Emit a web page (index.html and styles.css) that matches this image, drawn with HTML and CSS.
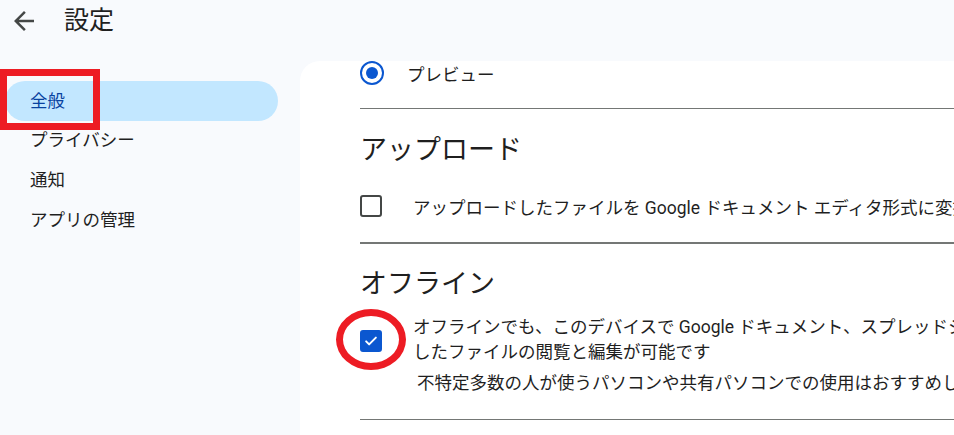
FILE: index.html
```html
<!DOCTYPE html>
<html lang="ja">
<head>
<meta charset="utf-8">
<title>設定</title>
<link rel="stylesheet" href="styles.css">
</head>
<body>
<header class="header">
  <svg class="back" viewBox="0 0 24 24" width="30" height="30"><path d="M20 11H7.83l5.59-5.59L12 4l-8 8 8 8 1.41-1.41L7.83 13H20v-2z" fill="#444746"/></svg>
  <h1 class="title">設定</h1>
</header>
<div class="layout">
  <nav class="sidebar">
    <div class="nav-item selected">全般</div>
    <div class="nav-item">プライバシー</div>
    <div class="nav-item">通知</div>
    <div class="nav-item">アプリの管理</div>
    <div class="mark-rect"></div>
  </nav>
  <main class="card">
    <div class="radio-row">
      <span class="radio"><span class="radio-dot"></span></span>
      <span class="label">プレビュー</span>
    </div>
    <hr class="divider d1">
    <h2 class="section-title t1">アップロード</h2>
    <div class="check-row">
      <span class="checkbox"></span>
      <span class="label">アップロードしたファイルを Google ドキュメント エディタ形式に変換する</span>
    </div>
    <hr class="divider d2">
    <h2 class="section-title t2">オフライン</h2>
    <div class="offline-row">
      <span class="checkbox checked">
        <svg viewBox="0 0 24 24" width="18" height="18"><path d="M5.5 12.5l4 4 9-9" fill="none" stroke="#fff" stroke-width="2.6" stroke-linecap="round" stroke-linejoin="round"/></svg>
        <span class="mark-ellipse"></span>
      </span>
      <div class="offline-text">
        <div class="line">オフラインでも、このデバイスで Google ドキュメント、スプレッドシート、スライドの最近使用</div>
        <div class="line">したファイルの閲覧と編集が可能です</div>
        <div class="line note">不特定多数の人が使うパソコンや共有パソコンでの使用はおすすめしません</div>
      </div>
    </div>
    <hr class="divider d3">
  </main>
</div>
</body>
</html>
```
FILE: styles.css
```css
html, body {
  margin: 0;
  padding: 0;
  height: 100%;
  overflow: hidden;
}
body {
  background: #f8fafd;
  font-family: Roboto, "Noto Sans CJK JP", sans-serif;
  color: #1f1f1f;
}
.header {
  height: 42px;
  display: flex;
  align-items: center;
  padding-left: 9px;
}
.back {
  display: block;
  flex: none;
}
.title {
  margin: 0 0 0 25px;
  font-size: 25px;
  font-weight: 400;
  color: #1f1f1f;
  line-height: 42px;
}
.layout {
  display: flex;
  height: calc(100% - 42px);
}
.sidebar {
  position: relative;
  width: 300px;
  flex: none;
  padding-top: 39px;
  box-sizing: border-box;
}
.nav-item {
  height: 40px;
  line-height: 40px;
  font-size: 17.5px;
  padding-left: 30px;
  margin-right: 22px;
  margin-left: 5px;
  padding-left: 25px;
  border-radius: 20px;
  color: #1f1f1f;
  position: relative;
  top: -1px;
}
.nav-item.selected {
  background: #c2e7ff;
  color: #0842a0;
  top: 0;
}
.mark-rect {
  position: absolute;
  left: 0;
  top: 27px;
  width: 86px;
  height: 47px;
  border: 7px solid #ed1c24;
}
.card {
  flex: 1;
  margin-top: 19px;
  background: #fff;
  border-top-left-radius: 20px;
  padding-left: 60px;
  overflow: hidden;
  white-space: nowrap;
}
.label {
  font-size: 17.5px;
}
.radio-row {
  display: flex;
  align-items: center;
  height: 24px;
}
.radio {
  width: 24px;
  height: 24px;
  box-sizing: border-box;
  border: 2.5px solid #0b57d0;
  border-radius: 50%;
  display: flex;
  align-items: center;
  justify-content: center;
  margin-right: 23px;
  flex: none;
}
.radio-dot {
  width: 12px;
  height: 12px;
  border-radius: 50%;
  background: #0b57d0;
}
.divider {
  border: none;
  margin: 0;
  height: 1px;
  background: #747775;
}
.d1 { margin-top: 23px; }
.d2 { margin-top: 16px; height: 2px; }
.d3 { margin-top: 23px; }
.section-title {
  margin: 0;
  font-size: 27px;
  font-weight: 400;
  line-height: 40px;
  height: 40px;
}
.t1 { margin-top: 21px; }
.t2 { margin-top: 20px; }
.check-row {
  display: flex;
  align-items: center;
  height: 40px;
  margin-top: 16px;
}
.checkbox {
  position: relative;
  width: 22px;
  height: 22px;
  box-sizing: border-box;
  border: 2.5px solid #444746;
  border-radius: 3px;
  margin-right: 31px;
  flex: none;
  display: flex;
  align-items: center;
  justify-content: center;
}
.checkbox.checked {
  background: #0b57d0;
  border-color: #0b57d0;
  margin-top: 15px;
}
.offline-row {
  display: flex;
  align-items: flex-start;
  margin-top: 11px;
}
.offline-text {
  font-size: 17.5px;
}
.line {
  line-height: 25px;
}
.note {
  margin-top: 6px;
  padding-left: 4px;
}
.mark-ellipse {
  position: absolute;
  left: -26px;
  top: -23px;
  width: 56px;
  height: 47px;
  border: 7px solid #ed1c24;
  border-radius: 50%;
}
```
